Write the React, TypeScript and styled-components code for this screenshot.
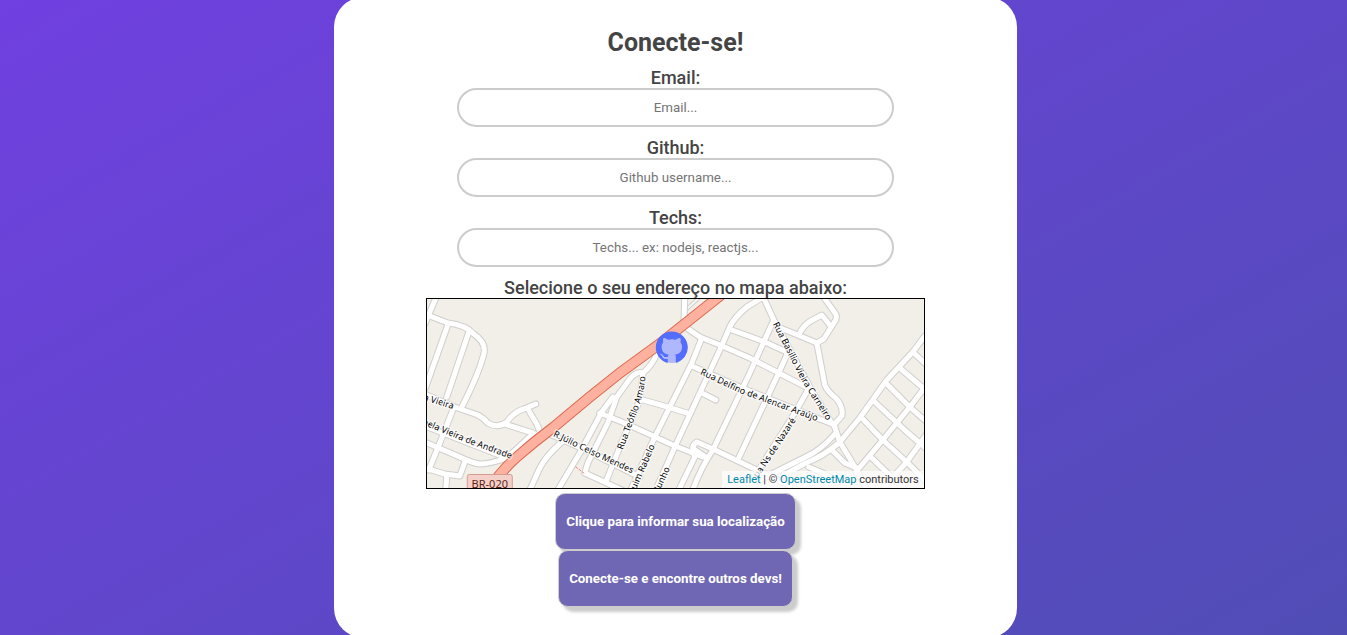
import React from 'react';
import styled, { createGlobalStyle } from 'styled-components';

const GlobalStyle = createGlobalStyle`
  * { box-sizing: border-box; margin: 0; padding: 0; }
  body { font-family: Roboto, "Liberation Sans", sans-serif; color: #444; }
  input, button { font-family: inherit; }
`;

const Page = styled.main`
  display: grid;
  grid-template-columns: 334fr 683fr 330fr;
  min-height: 100vh;
  overflow: hidden;
  background: linear-gradient(150deg, #7040e0, #504db5);
`;

const Card = styled.form`
  grid-column: 2;
  display: flex;
  flex-direction: column;
  align-items: center;
  margin: -3px 0;
  padding: 30px 0;
  border-radius: 30px;
  background: #fff;
`;

const Title = styled.h1`
  margin-bottom: 8px;
  font-size: 25px;
  line-height: 32px;
  font-weight: 700;
`;

const Field = styled.div`
  display: flex;
  flex-direction: column;
  width: 64%;
  margin-bottom: 10px;
`;

const Label = styled.label`
  font-size: 18px;
  line-height: 21px;
  font-weight: 500;
  text-align: center;
`;

const TextInput = styled.input`
  width: 100%;
  height: 39px;
  border: 2px solid #ccc;
  border-radius: 20px;
  background: #fff;
  text-align: center;
  &::placeholder { color: #757575; }
`;

const MapCaption = styled.h2`
  font-size: 18px;
  line-height: 21px;
  font-weight: 500;
`;

const MapFrame = styled.section`
  position: relative;
  width: 73%;
  height: 191px;
  margin-bottom: 4px;
  border: 1px solid #000;
  overflow: hidden;
  background: #f2efe9;
`;

const MapDrawing = styled.svg`
  display: block;
  width: 100%;
  height: 100%;
`;

const Attribution = styled.p`
  position: absolute;
  right: 0;
  bottom: 0;
  padding: 0 5px;
  background: rgba(255, 255, 255, 0.7);
  color: #333;
  font-size: 11px;
  line-height: 17px;
`;

const MapLink = styled.a`
  color: #0088aa;
  text-decoration: none;
`;

const Button = styled.button`
  height: 57px;
  padding: 0 10px;
  border: 1px solid #ccc;
  border-radius: 10px;
  background: #6f67b3;
  box-shadow: 5px 5px 3px #ccc;
  color: #fff;
  font-weight: 700;
`;

const roads = [
  'M437 296L430 312L425 324',
  'M430 316L448 323Q466 325 474 334Q487 343 484 354Q479 374 462 407',
  'M448 325L426 387',
  'M469 332L447 397',
  'M453 410L440 443L429 470',
  'M425 394L455 407L478 415Q484 418 488 423Q498 429 507 422Q514 412 524 409L536 404',
  'M505 424L533 433L540 437',
  'M528 409L537 424L541 434',
  'M533 434L507 458Q490 464 480 464Q472 463 460 457L425 442',
  'M425 468L445 474L460 476L465 462',
  'M447 475L446 490',
  'M425 426L512 460',
  'M562 442Q546 456 540 468L530 490',
  'M550 434L590 452L640 477',
  'M613 397L602 412L580 453L558 490',
  'M657 354Q652 366 643 373Q637 371 630 379L617 397L608 423L588 463L585 473L622 490',
  'M600 413L627 424L673 445L703 457',
  'M643 400L668 407L687 413',
  'M643 374L640 400L620 447L606 482',
  'M702 338L692 363L655 437L631 490',
  'M765 296L747 307Q734 318 730 327L720 350L675 447L656 490',
  'M685 296L684 326L700 337L720 345L750 358L777 372L808 388',
  'M732 330L765 342L787 352',
  'M692 366L740 387L817 418L833 424',
  'M702 393L716 400',
  'M773 322L750 373L713 450Q700 470 693 490',
  'M787 355L777 377L738 460',
  'M679 490L695 457Q690 446 697 442L713 449L757 470L790 486',
  'M694 449L706 457',
  'M763 296L775 322L810 387L830 420L835 427',
  'M778 327L798 335L817 343',
  'M800 333Q804 325 811 321L822 315L830 325',
  'M823 296L836 314Q838 318 834 323L824 339L817 343L825 385Q828 392 836 398Q844 407 842 416L834 425',
  'M808 390L795 413L757 473',
  'M834 424L837 433L840 442L857 470L867 490',
  'M836 433Q822 450 804 458L760 480',
  'M839 443Q824 456 806 463L784 475',
  'M832 450L845 463L857 468',
  'M809 467L823 473L838 482',
  'M925 336L913 352L887 380L860 418L840 442',
  'M913 352L927 365',
  'M900 368L927 391',
  'M888 385L910 407L927 422',
  'M875 402L907 432L927 449',
  'M862 418L883 440L907 462L927 482',
  'M872 458L897 482',
  'M927 385L910 407L883 440L856 472',
  'M927 434L907 462L885 486',
];

const highway = 'M486 494Q500 472 517 457Q534 442 554 427L590 397L620 373L657 346L720 296';

const streetNames = [
  { id: 'vieira', d: 'M421 399L462 412', text: 'la Vieira' },
  { id: 'andrade', d: 'M422 424L470 444L520 462', text: 'bela Vieira de Andrade' },
  { id: 'celso', d: 'M553 436L590 454L640 477', text: 'R.Júlio Celso Mendes' },
  { id: 'teofilo', d: 'M623 450L636 415Q645 394 646 370', text: 'Rua Teófilo Amaro' },
  { id: 'rabelo', d: 'M634 495L660 435', text: 'quim Rabelo' },
  { id: 'junho', d: 'M660 491L676 456', text: 'Junho' },
  { id: 'delfino', d: 'M700 374L740 393L830 426', text: 'Rua Delfino de Alencar Araújo' },
  { id: 'basilio', d: 'M773 324L802 381L833 430', text: 'Rua Basílio Vieira Carneiro' },
  { id: 'nazare', d: 'M758 478L781 444L806 405', text: 'ua Ns de Nazaré' },
];

const githubMark =
  'M8 0C3.58 0 0 3.58 0 8c0 3.54 2.29 6.53 5.47 7.59.4.07.55-.17.55-.38 0-.19-.01-.82-.01-1.49-2.01.37-2.53-.49-2.69-.94-.09-.23-.48-.94-.82-1.13-.28-.15-.68-.52-.01-.53.63-.01 1.08.58 1.23.82.72 1.21 1.87.87 2.33.66.07-.52.28-.87.51-1.07-1.78-.2-3.64-.89-3.64-3.95 0-.87.31-1.59.82-2.15-.08-.2-.36-1.02.08-2.12 0 0 .67-.21 2.2.82.64-.18 1.32-.27 2-.27s1.36.09 2 .27c1.53-1.04 2.2-.82 2.2-.82.44 1.1.16 1.92.08 2.12.51.56.82 1.27.82 2.15 0 3.07-1.87 3.75-3.65 3.95.29.25.54.73.54 1.48 0 1.07-.01 1.93-.01 2.2 0 .21.15.46.55.38A8.01 8.01 0 0 0 16 8c0-4.42-3.58-8-8-8z';

const StreetMap = () => (
  <MapDrawing viewBox="427 299 497 189" preserveAspectRatio="xMidYMid slice" role="img" aria-label="Mapa">
    <g fill="none" strokeLinecap="round" strokeLinejoin="round">
      <path d="M687 309L699 298" stroke="#d0cfcc" strokeWidth="4" />
      <path d="M687 309L699 298" stroke="#f7f5f2" strokeWidth="2" />
      {roads.map((d) => <path key={d} d={d} stroke="#d0cfcd" strokeWidth="7" />)}
      {roads.map((d) => <path key={d} d={d} stroke="#fff" strokeWidth="5" />)}
      <path d="M576 467L584 473" stroke="#fa8072" strokeWidth="1" strokeDasharray="2 2" />
      <path d={highway} stroke="#dd6a50" strokeWidth="11" />
      <path d={highway} stroke="#ffb1a0" strokeWidth="9" />
    </g>
    <g fontFamily="'Noto Sans', sans-serif" fontSize="9" fill="#000" stroke="#fff" strokeOpacity="0.6" strokeWidth="3" strokeLinejoin="round" paintOrder="stroke">
      {streetNames.map(({ id, d, text }) => (
        <React.Fragment key={id}>
          <path id={id} d={d} fill="none" stroke="none" />
          <text><textPath href={`#${id}`}>{text}</textPath></text>
        </React.Fragment>
      ))}
    </g>
    <rect x="467.5" y="474.5" width="45" height="20" rx="2" fill="#f5d0c9" stroke="#d39c92" />
    <text x="490" y="488" textAnchor="middle" fontFamily="'Noto Sans', sans-serif" fontSize="11" fill="#5b1f14">BR-020</text>
    <circle cx="672" cy="347.5" r="15.5" fill="#b0b8fd" />
    <path d={githubMark} transform="translate(656 331.5) scale(2)" fill="#536dfe" />
  </MapDrawing>
);

const fields = [
  { id: 'email', label: 'Email:', placeholder: 'Email...', type: 'email' },
  { id: 'github', label: 'Github:', placeholder: 'Github username...', type: 'text' },
  { id: 'techs', label: 'Techs:', placeholder: 'Techs... ex: nodejs, reactjs...', type: 'text' },
];

export default function App() {
  return (
    <>
      <GlobalStyle />
      <Page>
        <Card onSubmit={(e) => e.preventDefault()}>
          <Title>Conecte-se!</Title>
          {fields.map(({ id, label, placeholder, type }) => (
            <Field key={id}>
              <Label htmlFor={id}>{label}</Label>
              <TextInput id={id} type={type} placeholder={placeholder} />
            </Field>
          ))}
          <MapCaption>Selecione o seu endereço no mapa abaixo:</MapCaption>
          <MapFrame>
            <StreetMap />
            <Attribution>
              <MapLink href="#leaflet">Leaflet</MapLink> | © <MapLink href="#osm">OpenStreetMap</MapLink> contributors
            </Attribution>
          </MapFrame>
          <Button type="button">Clique para informar sua localização</Button>
          <Button type="submit">Conecte-se e encontre outros devs!</Button>
        </Card>
      </Page>
    </>
  );
}
